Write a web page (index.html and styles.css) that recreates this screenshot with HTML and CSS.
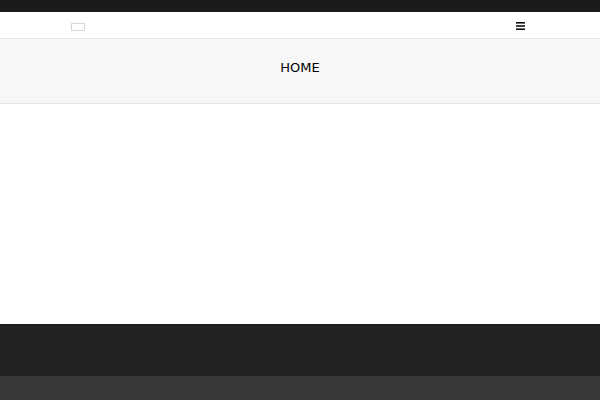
FILE: index.html
```html
<!DOCTYPE html>
<html>
<head>
<meta charset="utf-8">
<link rel="stylesheet" href="styles.css">
</head>
<body>
<div class="topbar"></div>
<header class="nav">
  <div class="logo"></div>
  <svg class="menu" width="9" height="8" viewBox="0 0 9 8" aria-label="menu">
    <rect x="0" y="0" width="9" height="1.6" fill="#111"/>
    <rect x="0" y="3.2" width="9" height="1.6" fill="#111"/>
    <rect x="0" y="6.4" width="9" height="1.6" fill="#111"/>
  </svg>
</header>
<section class="title-band">
  <h1 class="title">HOME</h1>
</section>
<main class="content"></main>
<footer class="footer"></footer>
<div class="bottom"></div>
</body>
</html>
```
FILE: styles.css
```css
html, body { margin: 0; padding: 0; }
body { font-family: "DejaVu Sans", sans-serif; background: #fff; color: #000; }
.topbar { height: 12px; background: #1b1b1b; }
.nav {
  height: 26px;
  border-bottom: 1px solid #e8e8e8;
  display: flex;
  align-items: center;
  justify-content: space-between;
  padding: 0 75px 0 71px;
}
.logo { width: 12px; height: 6px; border: 1px solid #d6d6d6; margin-top: 3px; }
.menu { display: block; margin-top: 1px; }
.title-band {
  height: 65px;
  box-sizing: border-box;
  padding-bottom: 7px;
  background: #f7f7f7;
  border-bottom: 1px solid #e6e6e6;
  display: flex;
  align-items: center;
  justify-content: center;
}
.title { margin: 0; font-size: 13px; font-weight: normal; letter-spacing: 0; color: #000; }
.content { height: 220px; }
.footer { height: 52px; background: #222; border-top: 1px solid #1a1a1a; box-sizing: border-box; }
.bottom { height: 24px; background: #383838; }
```
